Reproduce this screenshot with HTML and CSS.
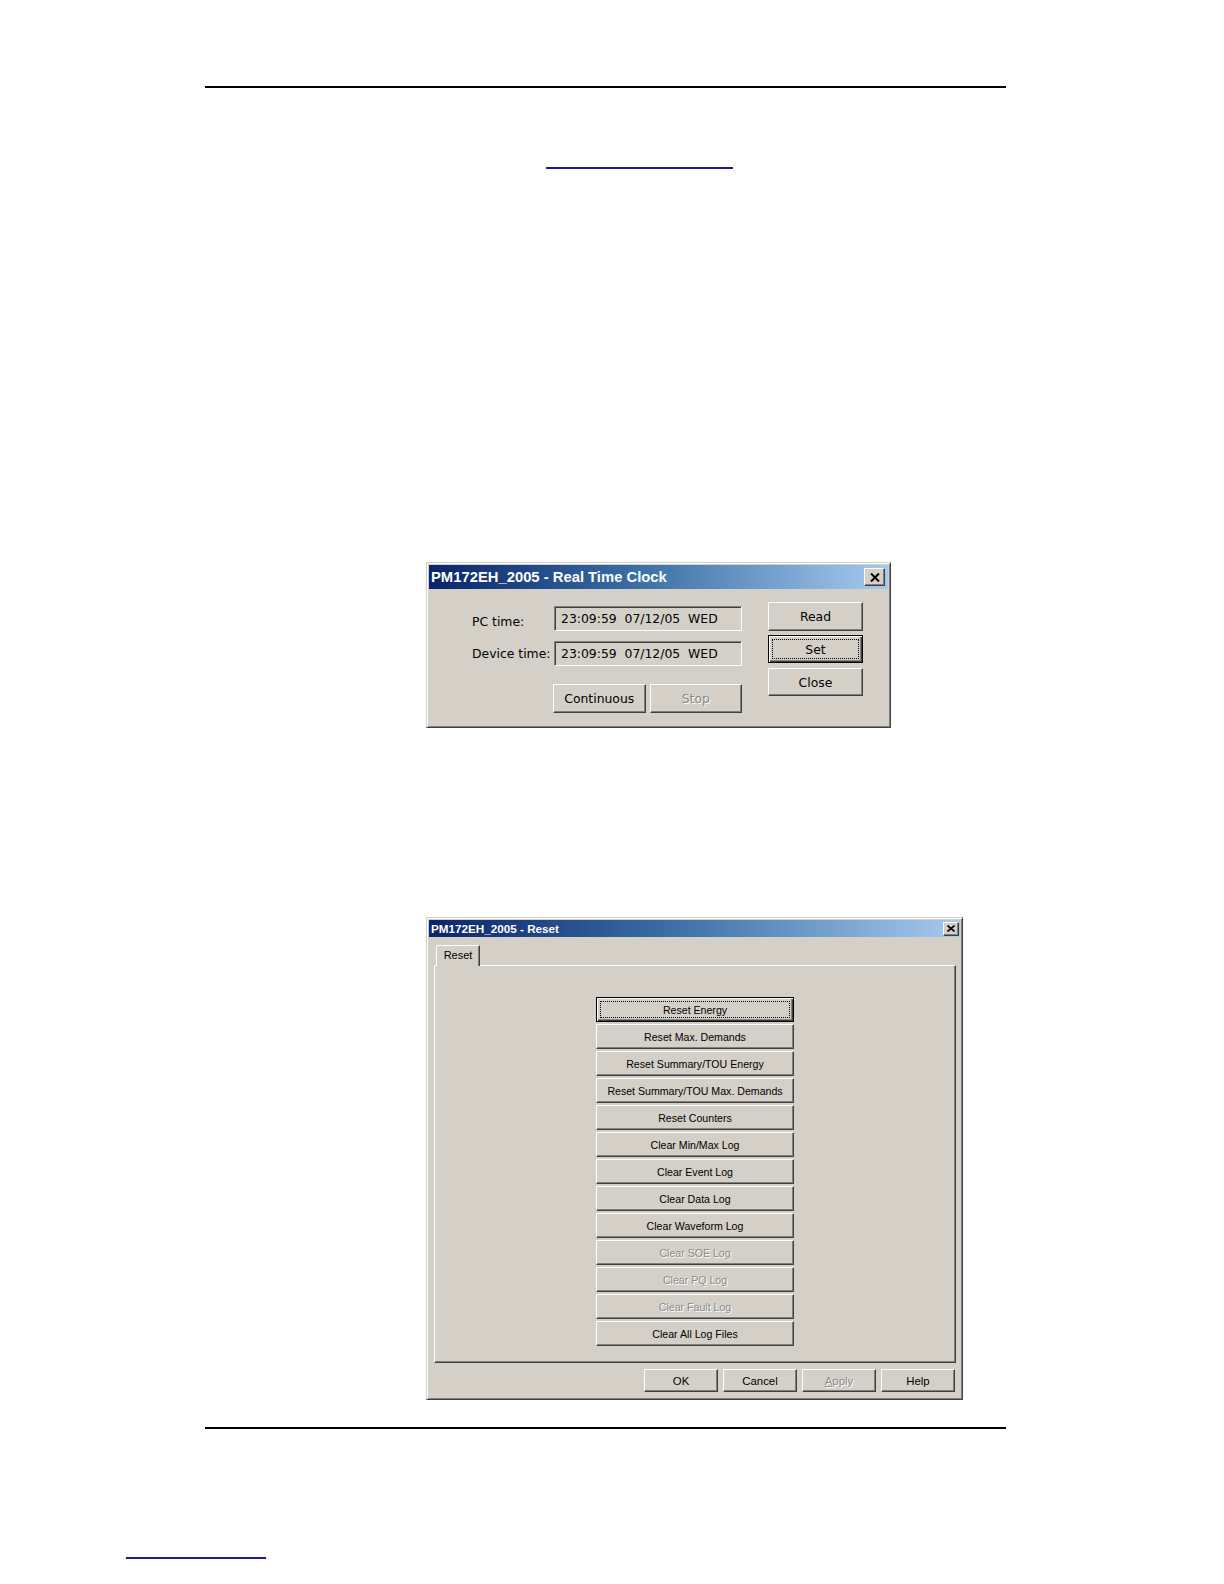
FILE: index.html
```html
<!DOCTYPE html>
<html>
<head>
<meta charset="utf-8">
<title>Real Time Clock / Reset</title>
<link rel="stylesheet" href="styles.css">
</head>
<body>
<div class="page">
  <div class="rule rule-top"></div>
  <a class="link link-top" href="#"></a>

  <div class="dlg dlg-rtc">
    <div class="title title-lg">
      <span class="title-text">PM172EH_2005 - Real Time Clock</span>
      <span class="xbtn xbtn-lg"><svg width="10" height="9" viewBox="0 0 10 9"><path d="M1 0.5 L9 8.5 M9 0.5 L1 8.5" stroke="#000" stroke-width="2" fill="none"/></svg></span>
    </div>
    <div class="rtc-body">
      <div class="rtc-left">
        <div class="rtc-row">
          <span class="lbl lbl-pc">PC time:</span>
          <div class="field">23:09:59&nbsp; 07/12/05&nbsp; WED</div>
        </div>
        <div class="rtc-row rtc-row2">
          <span class="lbl lbl-dev">Device time:</span>
          <div class="field">23:09:59&nbsp; 07/12/05&nbsp; WED</div>
        </div>
        <div class="rtc-actions">
          <div class="btn btn-rtc-wide">Continuous</div>
          <div class="btn btn-rtc-wide disabled">Stop</div>
        </div>
      </div>
      <div class="rtc-right">
        <div class="btn btn-rtc btn-read">Read</div>
        <div class="btn btn-rtc btn-default btn-set">Set</div>
        <div class="btn btn-rtc btn-close">Close</div>
      </div>
    </div>
  </div>

  <div class="dlg dlg-reset">
    <div class="title title-sm">
      <span class="title-text">PM172EH_2005 - Reset</span>
      <span class="xbtn xbtn-sm"><svg width="8" height="7" viewBox="0 0 8 7"><path d="M0.5 0.5 L7.5 6.5 M7.5 0.5 L0.5 6.5" stroke="#000" stroke-width="1.6" fill="none"/></svg></span>
    </div>
    <div class="reset-body">
      <div class="tabs">
        <div class="tab">Reset</div>
      </div>
      <div class="panel">
        <div class="reset-list">
          <div class="btn btn-list btn-default">Reset Energy</div>
          <div class="btn btn-list">Reset Max. Demands</div>
          <div class="btn btn-list">Reset Summary/TOU Energy</div>
          <div class="btn btn-list">Reset Summary/TOU Max. Demands</div>
          <div class="btn btn-list">Reset Counters</div>
          <div class="btn btn-list">Clear Min/Max Log</div>
          <div class="btn btn-list">Clear Event Log</div>
          <div class="btn btn-list">Clear Data Log</div>
          <div class="btn btn-list">Clear Waveform Log</div>
          <div class="btn btn-list disabled">Clear SOE Log</div>
          <div class="btn btn-list disabled">Clear PQ Log</div>
          <div class="btn btn-list disabled">Clear Fault Log</div>
          <div class="btn btn-list">Clear All Log Files</div>
        </div>
      </div>
      <div class="footer-btns">
        <div class="btn btn-foot">OK</div>
        <div class="btn btn-foot">Cancel</div>
        <div class="btn btn-foot disabled"><span><u>A</u>pply</span></div>
        <div class="btn btn-foot">Help</div>
      </div>
    </div>
  </div>

  <div class="rule rule-bottom"></div>
  <a class="link link-bottom" href="#"></a>
</div>
</body>
</html>
```

FILE: styles.css
```css
html, body {
  margin: 0;
  padding: 0;
  background: #ffffff;
}

.page {
  width: 1224px;
  height: 1584px;
  padding-top: 86px;
  box-sizing: border-box;
  font-family: "DejaVu Sans", sans-serif;
  overflow: hidden;
}

.rule {
  height: 2px;
  background: #000;
  margin-left: 205px;
  width: 801px;
}

.link {
  display: block;
  height: 0;
  border-bottom: 2px solid #1c1c8f;
}

.link-top {
  margin-top: 79px;
  margin-left: 546px;
  width: 187px;
}

.link-bottom {
  margin-top: 128px;
  margin-left: 126px;
  width: 140px;
}

.rule-bottom {
  margin-top: 27px;
}

/* ---------- dialogs ---------- */
.dlg {
  box-sizing: border-box;
  margin-left: 426px;
  background: #d4d0c8;
  border: 1px solid;
  border-color: #d4d0c8 #404040 #404040 #d4d0c8;
  box-shadow: inset 1px 1px 0 #ffffff, inset -1px -1px 0 #808080;
  padding: 2px;
}

.dlg-rtc {
  margin-top: 393px;
  width: 465px;
  height: 166px;
}

.dlg-reset {
  margin-top: 189px;
  width: 537px;
  height: 483px;
}

.title {
  display: flex;
  align-items: center;
  justify-content: space-between;
  background: linear-gradient(to right, #0a246a 0%, #3a6ea5 45%, #a6caf0 100%);
  color: #fff;
  font-family: "Liberation Sans", Arial, sans-serif;
  font-weight: bold;
}

.title-lg {
  height: 24px;
  padding: 0 3px 0 2px;
  font-size: 14.8px;
}

.title-sm {
  height: 17px;
  padding: 0 1px 0 2px;
  font-size: 11.7px;
}

.title-text {
  white-space: nowrap;
}

.xbtn {
  box-sizing: border-box;
  display: flex;
  align-items: center;
  justify-content: center;
  background: #d4d0c8;
  border: 1px solid;
  border-color: #ffffff #404040 #404040 #ffffff;
  box-shadow: inset -1px -1px 0 #808080;
}

.xbtn-lg {
  width: 21px;
  height: 18px;
}

.xbtn-sm {
  width: 16px;
  height: 14px;
}

/* ---------- buttons ---------- */
.btn {
  box-sizing: border-box;
  display: flex;
  align-items: center;
  justify-content: center;
  background: #d4d0c8;
  color: #000;
  border: 1px solid;
  border-color: #ffffff #404040 #404040 #ffffff;
  box-shadow: inset -1px -1px 0 #808080;
  white-space: nowrap;
}

.btn-default {
  border: 1px solid #000;
  box-shadow: inset 1px 1px 0 #ffffff, inset -1px -1px 0 #404040, inset -2px -2px 0 #808080;
  outline: 1px dotted #000;
  outline-offset: -5px;
}

.disabled {
  color: #8a8a8a;
  text-shadow: 1px 1px 0 #ffffff;
}

/* ---------- real time clock ---------- */
.rtc-body {
  display: flex;
  height: 136px;
  box-sizing: border-box;
  padding-left: 43px;
  font-size: 12.4px;
  color: #000;
}

.rtc-left {
  width: 270px;
  padding-top: 17px;
}

.rtc-row {
  display: flex;
  height: 25px;
}

.rtc-row2 {
  margin-top: 10px;
}

.lbl {
  width: 82px;
  line-height: 16px;
  white-space: nowrap;
}

.lbl-pc {
  padding-top: 8px;
}

.lbl-dev {
  padding-top: 5px;
}

.field {
  box-sizing: border-box;
  width: 188px;
  height: 25px;
  border: 1px solid;
  border-color: #808080 #ffffff #ffffff #808080;
  box-shadow: inset 1px 1px 0 #404040, inset -1px -1px 0 #d4d0c8;
  background: #d4d0c8;
  padding-left: 6px;
  line-height: 23px;
  white-space: nowrap;
}

.rtc-actions {
  display: flex;
  gap: 4px;
  margin-top: 18px;
  margin-left: 81px;
}

.btn-rtc-wide {
  width: 94px;
  height: 29px;
}

.rtc-right {
  display: flex;
  flex-direction: column;
  margin-left: 26px;
  padding-top: 13px;
}

.btn-rtc {
  width: 95px;
  height: 28px;
}

.btn-read {
  height: 29px;
}

.btn-set {
  margin-top: 4px;
}

.btn-close {
  margin-top: 5px;
}

/* ---------- reset dialog ---------- */
.reset-body {
  padding: 8px 4px 0 5px;
  font-family: "Liberation Sans", Arial, sans-serif;
  font-size: 10.6px;
  color: #000;
}

.tabs {
  display: flex;
  height: 20px;
  padding-left: 2px;
}

.tab {
  position: relative;
  z-index: 1;
  box-sizing: border-box;
  width: 44px;
  height: 21px;
  background: #d4d0c8;
  border: 1px solid;
  border-bottom: none;
  border-color: #ffffff #404040 #d4d0c8 #ffffff;
  box-shadow: inset -1px 0 0 #808080;
  border-top-left-radius: 2px;
  display: flex;
  justify-content: center;
  padding-top: 3px;
  font-size: 11px;
}

.panel {
  box-sizing: border-box;
  height: 398px;
  border: 1px solid;
  border-color: #ffffff #404040 #404040 #ffffff;
  box-shadow: inset -1px -1px 0 #808080;
  padding-top: 31px;
  display: flex;
  justify-content: center;
}

.reset-list {
  display: flex;
  flex-direction: column;
  gap: 2px;
}

.btn-list {
  width: 198px;
  height: 25px;
}

.footer-btns {
  display: flex;
  justify-content: flex-end;
  gap: 5px;
  margin-top: 6px;
  padding-right: 1px;
}

.btn-foot {
  width: 74px;
  height: 23px;
  font-size: 11.4px;
}
```
